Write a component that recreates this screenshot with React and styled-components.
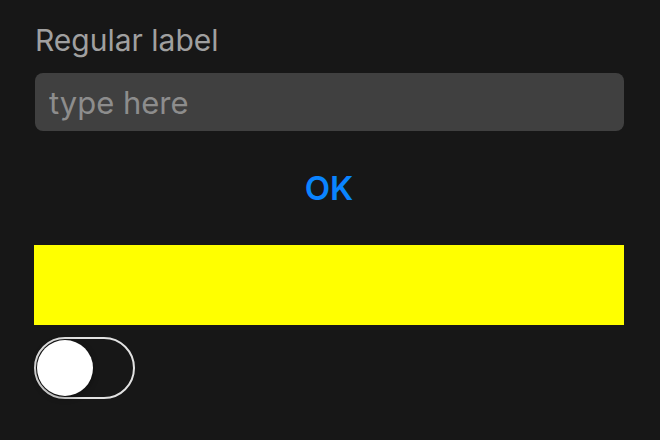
import styled, { createGlobalStyle } from 'styled-components'
import { useState } from 'react'

const Global = createGlobalStyle`
  html, body {
    margin: 0;
    padding: 0;
    background: #171717;
    font-family: Inter, 'Noto Sans', sans-serif;
  }
`

function App () {
  const [on, setOn] = useState(false)
  return (
    <Page>
      <Global />
      <Label>Regular label</Label>
      <Field placeholder='type here' />
      <OkButton>OK</OkButton>
      <Banner />
      <Switch $on={on} onClick={() => setOn(!on)}>
        <Thumb $on={on} />
      </Switch>
    </Page>
  )
}

export default App

const Page = styled.div`
  width: 660px;
  height: 440px;
  box-sizing: border-box;
  padding: 22px 36px 0 34px;
  display: flex;
  flex-direction: column;
`

const Label = styled.div`
  color: #a0a0a0;
  font-size: 30px;
  line-height: 36px;
  margin: 0 0 2px 1px;
`

const Field = styled.input`
  margin: 13px 0 0 1px;
  height: 58px;
  box-sizing: border-box;
  border: none;
  border-radius: 8px;
  background: #404040;
  padding: 0 14px;
  font-family: inherit;
  font-size: 31px;
  color: #e0e0e0;
  outline: none;
  &::placeholder {
    color: #8d8d8d;
  }
`

const OkButton = styled.button`
  margin-top: 40px;
  align-self: center;
  background: none;
  border: none;
  padding: 0;
  color: #0a84ff;
  font-family: inherit;
  font-size: 33px;
  font-weight: 600;
  line-height: 34px;
  cursor: pointer;
`

const Banner = styled.div`
  margin-top: 40px;
  height: 80px;
  background: #ffff00;
`

const Switch = styled.div`
  margin-top: 12px;
  width: 101px;
  height: 62px;
  box-sizing: border-box;
  border: 2px solid #e2e2e2;
  border-radius: 31px;
  background: ${p => (p.$on ? '#34c759' : 'transparent')};
  position: relative;
  cursor: pointer;
`

const Thumb = styled.div`
  position: absolute;
  top: 1px;
  left: ${p => (p.$on ? '42px' : '1px')};
  width: 56px;
  height: 56px;
  border-radius: 50%;
  background: #fff;
  box-shadow: 0 2px 6px rgba(0, 0, 0, 0.35);
`
